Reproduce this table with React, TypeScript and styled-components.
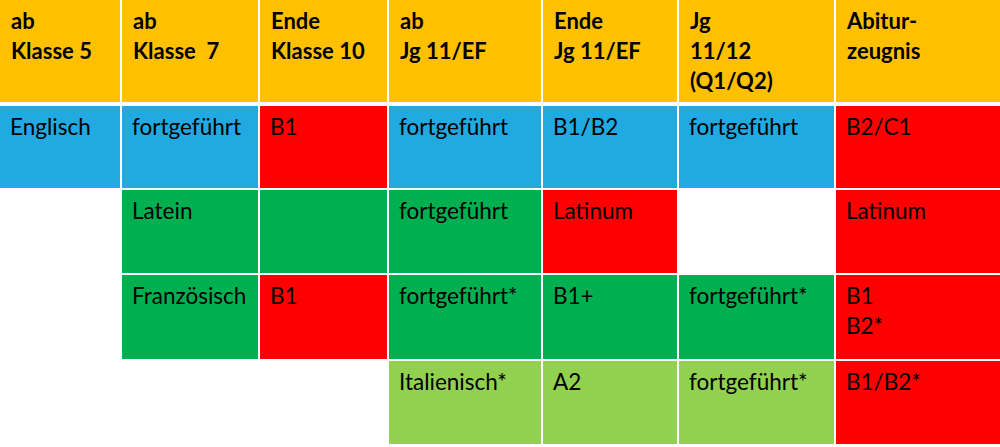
import React from "react";
import styled, { createGlobalStyle } from "styled-components";

const GlobalStyle = createGlobalStyle`
  html, body {
    margin: 0;
    padding: 0;
    background: #ffffff;
  }
  body {
    font-family: Lato, "Noto Sans", "Liberation Sans", sans-serif;
    color: #000000;
  }
`;

type Tone = "gold" | "blue" | "red" | "green" | "lime" | "none";

const tones: Record<Tone, string> = {
  gold: "#ffc000",
  blue: "#21a9e1",
  red: "#ff0000",
  green: "#00b050",
  lime: "#92d050",
  none: "transparent",
};

const Table = styled.div`
  display: grid;
  width: 1000px;
  grid-template-columns: 120px 136px 127px 152px 134px 155px 1fr;
  grid-template-rows: 104px 82px 83px 84px 83px;
  column-gap: 2px;
  row-gap: 2px;
`;

const HeaderCell = styled.div`
  background: ${tones.gold};
  margin-bottom: 2px;
  padding: 6px 10px 0 11px;
  font-weight: 700;
  font-size: 22px;
  line-height: 30px;
  white-space: pre-wrap;
`;

const Cell = styled.div<{ $tone: Tone }>`
  background: ${(p) => tones[p.$tone]};
  padding: 6px 10px 0 10px;
  font-size: 22.5px;
  line-height: 30px;
  white-space: pre-wrap;
`;

const headers = [
  "ab\nKlasse 5",
  "ab\nKlasse  7",
  "Ende\nKlasse 10",
  "ab\nJg 11/EF",
  "Ende\nJg 11/EF",
  "Jg\n11/12\n(Q1/Q2)",
  "Abitur-\nzeugnis",
];

type Entry = [Tone, string];

const rows: Entry[][] = [
  [
    ["blue", "Englisch"],
    ["blue", "fortgeführt"],
    ["red", "B1"],
    ["blue", "fortgeführt"],
    ["blue", "B1/B2"],
    ["blue", "fortgeführt"],
    ["red", "B2/C1"],
  ],
  [
    ["none", ""],
    ["green", "Latein"],
    ["green", ""],
    ["green", "fortgeführt"],
    ["red", "Latinum"],
    ["none", ""],
    ["red", "Latinum"],
  ],
  [
    ["none", ""],
    ["green", "Französisch"],
    ["red", "B1"],
    ["green", "fortgeführt*"],
    ["green", "B1+"],
    ["green", "fortgeführt*"],
    ["red", "B1\nB2*"],
  ],
  [
    ["none", ""],
    ["none", ""],
    ["none", ""],
    ["lime", "Italienisch*"],
    ["lime", "A2"],
    ["lime", "fortgeführt*"],
    ["red", "B1/B2*"],
  ],
];

export default function App() {
  return (
    <>
      <GlobalStyle />
      <Table>
        {headers.map((h) => (
          <HeaderCell key={h}>{h}</HeaderCell>
        ))}
        {rows.map((row, r) =>
          row.map(([tone, text], c) => (
            <Cell key={`${r}-${c}`} $tone={tone}>
              {text}
            </Cell>
          ))
        )}
      </Table>
    </>
  );
}
